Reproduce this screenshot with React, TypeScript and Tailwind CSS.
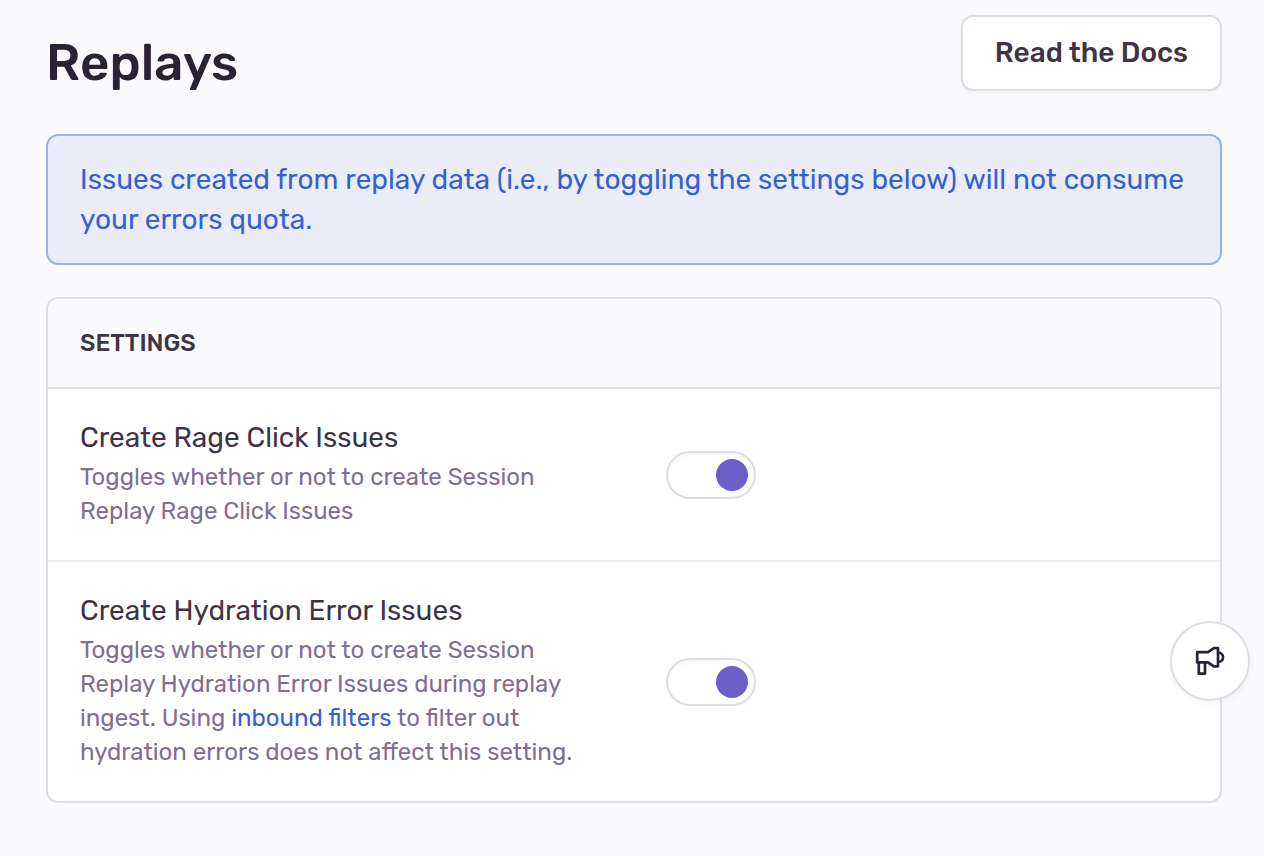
import React, { useState } from "react";

type SettingRowProps = {
  id: string;
  label: string;
  help: React.ReactNode;
};

function MegaphoneIcon() {
  return (
    <svg
      viewBox="0 0 32 32"
      className="h-8 w-8"
      fill="none"
      stroke="currentColor"
      strokeWidth="2.7"
      strokeLinecap="round"
      strokeLinejoin="round"
      aria-hidden="true"
    >
      <path d="M3.2 7.2H14L19.8 3.2H24V21.3H19.8L14 17.3H3.2Z" />
      <path d="M24.4 7.6A4.6 4.6 0 0 1 24.4 16.9" />
      <path d="M4.8 17.5V28.6H11V17.5" />
    </svg>
  );
}

function SettingRow({ id, label, help }: SettingRowProps) {
  const [enabled, setEnabled] = useState<boolean>(true);

  return (
    <div className="flex items-center border-b-2 border-[#f0ecf3] py-8 last:border-b-0">
      <div className="w-1/2 pr-12 pl-8">
        <label htmlFor={id} className="block text-[28px] leading-[34px]">
          {label}
        </label>
        <p className="pt-[5px] text-[24px] leading-[34px] text-[#80708f]">{help}</p>
      </div>
      <div className="w-1/2 px-8">
        <button
          id={id}
          type="button"
          role="switch"
          aria-checked={enabled}
          onClick={() => setEnabled(!enabled)}
          className="flex h-12 w-[90px] cursor-pointer items-center rounded-full border-2 border-[#e0dce5] bg-white px-1.5 inset-shadow-sm inset-shadow-[#2b2233]/4"
        >
          <span
            className={
              enabled
                ? "ml-auto h-8 w-8 rounded-full bg-[#6c5fc7]"
                : "h-8 w-8 rounded-full bg-[#80708f]"
            }
          />
        </button>
      </div>
    </div>
  );
}

export default function App() {
  return (
    <div className="min-h-screen bg-[#fafafc] pt-[15px] pr-[42px] pb-12 pl-[46px] font-['Rubik','Inter',sans-serif] text-[#3e3446]">
      <header className="flex items-start justify-between">
        <h1 className="pt-4 text-[51px] leading-16 font-medium text-[#2b2233]">
          Replays
        </h1>
        <a
          href="#docs"
          className="rounded-xl border-2 border-[#e0dce5] bg-white px-8 py-5 text-[28px] leading-8 font-medium shadow-[0_2px_4px_rgba(43,34,51,0.04)]"
        >
          Read the Docs
        </a>
      </header>

      <div className="mt-[39px] rounded-xl border-2 border-[#9db1ed] bg-[#eaecf8] px-8 pt-6 pb-[23px] text-[28px] leading-10 text-[#3560d0]">
        Issues created from replay data (i.e., by toggling the settings below)
        will not consume your errors quota.
      </div>

      <section className="mt-8 rounded-xl border-2 border-[#e0dce5] bg-white">
        <h2 className="rounded-t-[10px] border-b-2 border-[#e0dce5] bg-[#fafafc] px-8 py-7 text-[24px] leading-8 font-medium uppercase">
          Settings
        </h2>
        <div>
          <SettingRow
            id="rage-click-issues"
            label="Create Rage Click Issues"
            help="Toggles whether or not to create Session Replay Rage Click Issues"
          />
          <SettingRow
            id="hydration-error-issues"
            label="Create Hydration Error Issues"
            help={
              <>
                Toggles whether or not to create Session Replay Hydration Error
                Issues during replay ingest. Using{" "}
                <a href="#inbound-filters" className="text-[#3560d0]">
                  inbound filters
                </a>{" "}
                to filter out hydration errors does not affect this setting.
              </>
            }
          />
        </div>
      </section>

      <button
        type="button"
        aria-label="Give Feedback"
        className="fixed right-3.5 bottom-[155px] flex h-20 w-20 cursor-pointer items-center justify-center rounded-full border-2 border-[#e0dce5] bg-white text-[#2b2233] shadow-[0_2px_6px_rgba(43,34,51,0.05)]"
      >
        <MegaphoneIcon />
      </button>
    </div>
  );
}
